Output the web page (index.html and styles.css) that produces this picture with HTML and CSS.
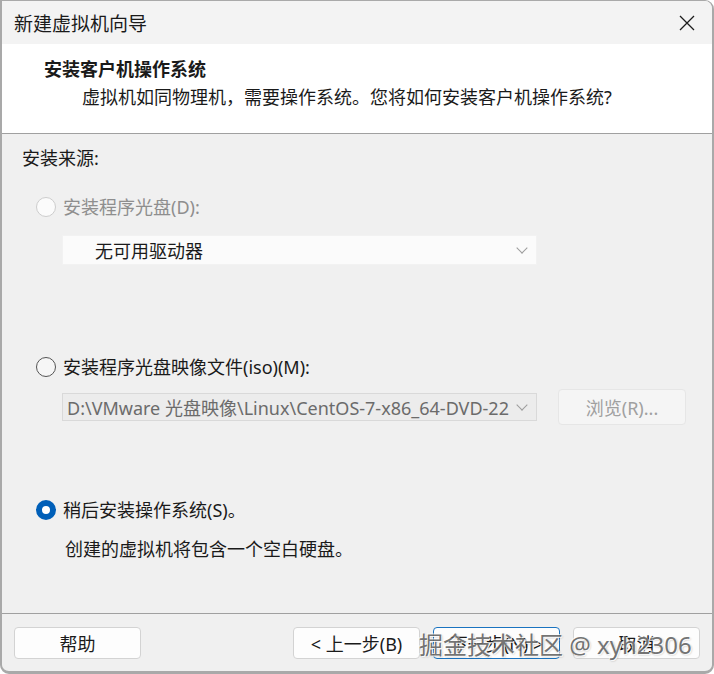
FILE: index.html
```html
<!DOCTYPE html>
<html lang="zh-CN">

<head>
    <meta charset="UTF-8">
    <meta name="viewport" content="width=device-width, initial-scale=1.0">
    <title>新建虚拟机向导</title>
    <link rel="stylesheet" href="styles.css">
</head>

<body>
    <div class="window">
        <div class="titlebar">
            <span class="title">新建虚拟机向导</span>
            <svg class="close" width="16" height="16" viewBox="0 0 16 16">
                <path d="M1 1 L15 15 M15 1 L1 15" stroke="#1c1c1c" stroke-width="1.3" fill="none" />
            </svg>
        </div>

        <div class="header">
            <h1>安装客户机操作系统</h1>
            <p>虚拟机如同物理机，需要操作系统。您将如何安装客户机操作系统?</p>
        </div>

        <div class="content">
            <div class="group-label">安装来源:</div>

            <label class="option disabled opt-disc">
                <span class="radio"></span>
                <span>安装程序光盘(D):</span>
            </label>
            <div class="select select-disc">
                <span class="value">无可用驱动器</span>
                <span class="chevron"></span>
            </div>

            <label class="option opt-iso">
                <span class="radio"></span>
                <span>安装程序光盘映像文件(iso)(M):</span>
            </label>
            <div class="iso-row">
                <div class="select select-iso">
                    <span class="value">D:\VMware 光盘映像\Linux\CentOS-7-x86_64-DVD-2207-02.iso</span>
                    <span class="chevron"></span>
                </div>
                <button class="btn btn-browse">浏览(R)...</button>
            </div>

            <label class="option opt-later">
                <span class="radio checked"></span>
                <span>稍后安装操作系统(S)。</span>
            </label>
            <div class="hint">创建的虚拟机将包含一个空白硬盘。</div>
        </div>

        <div class="footer">
            <button class="btn">帮助</button>
            <div class="nav">
                <button class="btn">&lt; 上一步(B)</button>
                <button class="btn focused">下一步(N) &gt;</button>
                <button class="btn">取消</button>
            </div>
            <div class="watermark">掘金技术社区 @ xyh2306</div>
        </div>
    </div>
</body>

</html>
```

FILE: styles.css
```css
* {
    margin: 0;
    padding: 0;
    box-sizing: border-box;
}
body {
    font-family: "Noto Sans", "Noto Sans CJK SC", sans-serif;
    font-size: 18px;
    color: #1a1a1a;
    background: #ffffff;
}
.window {
    width: 714px;
    height: 674px;
    display: flex;
    flex-direction: column;
    background: #f0f0f0;
    border: 2px solid #a9a9a9;
    border-top-width: 1px;
    border-bottom-width: 3px;
    border-radius: 0 9px 9px 9px;
    overflow: hidden;
}
.titlebar {
    height: 43px;
    display: flex;
    align-items: center;
    justify-content: space-between;
    padding: 0 17px 0 12px;
    background: #f3f3f3;
}
.title {
    font-size: 19px;
    font-family: "Noto Sans CJK SC", sans-serif;
}
.header {
    height: 90px;
    background: #ffffff;
    border-bottom: 1px solid #a0a0a0;
    padding: 12px 0 0 42px;
}
.header h1 {
    font-size: 18px;
    font-weight: bold;
    line-height: 24px;
    font-family: "Noto Sans CJK SC", sans-serif;
}
.header p {
    margin-top: 5px;
    padding-left: 38px;
    line-height: 24px;
}
.content {
    flex: 1;
    padding: 12px 0 0 20px;
    display: flex;
    flex-direction: column;
    align-items: flex-start;
}
.group-label {
    line-height: 24px;
}
.option {
    display: flex;
    align-items: center;
    gap: 7px;
    line-height: 24px;
    margin-left: 14px;
}
.option.disabled {
    color: #8e8e8e;
}
.opt-disc {
    margin-top: 25px;
}
.opt-iso {
    margin-top: 90px;
}
.opt-later {
    margin-top: 73px;
}
.radio {
    width: 20px;
    height: 20px;
    border-radius: 50%;
    border: 1px solid #545454;
    background: #f6f6f6;
}
.disabled .radio {
    border-color: #cdcdcd;
    background: #fbfbfb;
}
.radio.checked {
    border: 6px solid #005fb8;
    background: #ffffff;
}
.select {
    width: 475px;
    display: flex;
    align-items: center;
    justify-content: space-between;
    margin-left: 40px;
}
.select .value {
    white-space: nowrap;
    overflow: hidden;
}
.chevron {
    width: 8px;
    height: 8px;
    border-right: 1px solid #9c9c9c;
    border-bottom: 1px solid #9c9c9c;
    transform: rotate(45deg);
    margin-top: -5px;
    flex-shrink: 0;
}
.select-disc {
    height: 30px;
    margin-top: 16px;
    padding: 0 10px 0 32px;
    background: #fbfbfb;
    border: 1px solid #f2f2f2;
}
.iso-row {
    display: flex;
    align-items: center;
    gap: 21px;
    margin-top: 10px;
}
.select-iso {
    height: 28px;
    padding: 0 10px 0 4px;
    background: #ececec;
    border: 1px solid #d9d9d9;
    color: #6b6b6b;
}
.select-iso .value {
    width: 442px;
}
.hint {
    margin: 15px 0 0 43px;
    line-height: 24px;
}
.footer {
    position: relative;
    height: 58px;
    border-top: 1px solid #a0a0a0;
    display: flex;
    justify-content: space-between;
    padding: 13px 12px 0 12px;
}
.nav {
    display: flex;
    gap: 13px;
}
.btn {
    width: 127px;
    height: 32px;
    font: inherit;
    font-size: 18px;
    color: #1a1a1a;
    background: #fdfdfd;
    border: 1px solid #d3d3d3;
    border-radius: 4px;
}
.btn.focused {
    border-color: #1a73c0;
}
.btn-browse {
    width: 128px;
    height: 36px;
    color: #a0a0a0;
    background: #f5f5f5;
    border-color: #e6e6e6;
}
/* site watermark stamped over the button row */
.watermark {
    position: absolute;
    left: 417px;
    top: 12px;
    font-size: 24px;
    color: rgba(80, 80, 80, 0.8);
    text-shadow: 1px 1px 0 rgba(255, 255, 255, 0.9), -1px -1px 0 rgba(255, 255, 255, 0.7), 1px 1px 2px rgba(0, 0, 0, 0.3);
    white-space: nowrap;
    pointer-events: none;
}
```
